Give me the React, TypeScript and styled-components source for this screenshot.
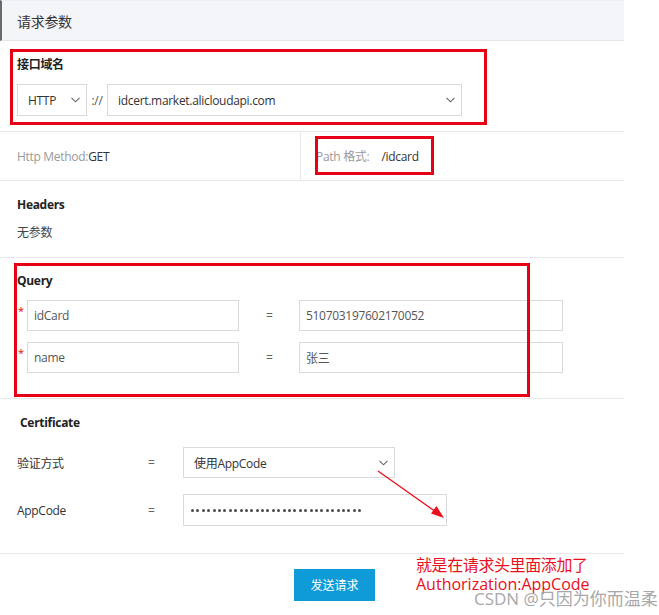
import React from 'react';
import styled, { createGlobalStyle } from 'styled-components';

const Global = createGlobalStyle`
  html, body { margin: 0; padding: 0; background: #fff; }
  body {
    font-family: "Open Sans", "Noto Sans CJK SC", sans-serif;
    font-size: 12px;
    letter-spacing: -0.3px;
    color: #333;
  }
  * { box-sizing: border-box; }
`;

const Page = styled.div`
  position: relative;
  width: 659px;
  height: 615px;
  overflow: hidden;
`;

const Panel = styled.div`
  width: 624px;
`;

const TitleBar = styled.div`
  height: 41px;
  background: #f4f5f9;
  border-left: 2px solid #6a6a6a;
  border-top: 1px solid #eceef3;
  border-bottom: 1px solid #e4e6eb;
  padding-left: 15px;
  display: flex;
  align-items: center;
  font-size: 14px;
  color: #333;
`;

const Section = styled.div<{ $pt: number; $pb: number; $pl?: number }>`
  position: relative;
  padding: ${p => p.$pt}px 0 ${p => p.$pb}px ${p => p.$pl ?? 17}px;
  border-bottom: 1px solid #e8e9ed;
`;

const Heading = styled.div<{ $mb: number; $indent?: number }>`
  font-weight: 700;
  line-height: 16px;
  color: #222;
  margin-bottom: ${p => p.$mb}px;
  padding-left: ${p => p.$indent ?? 0}px;
`;

const Note = styled.div`
  line-height: 16px;
  color: #444;
`;

const Frame = styled.div<{ $l: number; $t: number; $w: number; $h: number }>`
  position: absolute;
  left: ${p => p.$l}px;
  top: ${p => p.$t}px;
  width: ${p => p.$w}px;
  height: ${p => p.$h}px;
  border: 3px solid #e50015;
  pointer-events: none;
  z-index: 2;
`;

const DomainRow = styled.div`
  display: flex;
  align-items: center;
  gap: 4px;
`;

const Sep = styled.span`
  width: 12px;
  color: #555;
  text-align: center;
`;

const Select = styled.div<{ $w: number; $h?: number }>`
  width: ${p => p.$w}px;
  height: ${p => p.$h ?? 32}px;
  border: 1px solid #dadada;
  background: #fff;
  display: flex;
  align-items: center;
  justify-content: space-between;
  padding: 0 6px 0 10px;
  color: #333;
`;

const Input = styled.div<{ $w: number; $h?: number }>`
  width: ${p => p.$w}px;
  height: ${p => p.$h ?? 31}px;
  border: 1px solid #dadada;
  background: #fff;
  display: flex;
  align-items: center;
  padding-left: 6px;
  color: #555;
`;

const Mask = styled.div`
  display: flex;
  align-items: center;
  gap: 2.4px;
  padding-left: 1px;
`;

const MaskDot = styled.span`
  width: 3px;
  height: 3px;
  border-radius: 50%;
  background: #4a4a4a;
`;

const Chevron = () => (
  <svg width="9" height="6" viewBox="0 0 9 6">
    <polyline points="0.5,0.8 4.5,4.8 8.5,0.8" fill="none" stroke="#666" strokeWidth="1.1" />
  </svg>
);

const MethodRow = styled.div`
  display: grid;
  grid-template-columns: 301px 1fr;
  height: 49px;
  border-bottom: 1px solid #e8e9ed;
`;

const Cell = styled.div<{ $divider?: boolean; $pl: number }>`
  position: relative;
  display: flex;
  align-items: center;
  padding-left: ${p => p.$pl}px;
  border-right: ${p => (p.$divider ? '1px solid #e8e9ed' : 'none')};
`;

const Muted = styled.span`
  color: #9a9a9a;
`;

const Strong = styled.span<{ $ml?: number }>`
  color: #333;
  margin-left: ${p => p.$ml ?? 0}px;
`;

const QueryRows = styled.div`
  display: flex;
  flex-direction: column;
  gap: 11px;
`;

const QueryRow = styled.div`
  display: grid;
  grid-template-columns: 10px 212px 60px 264px;
  align-items: center;
`;

const Star = styled.span`
  align-self: start;
  margin-top: 7px;
  color: #e50015;
  font-size: 11px;
  line-height: 8px;
  padding-left: 1px;
`;

const Eq = styled.span<{ $pl: number }>`
  color: #666;
  padding-left: ${p => p.$pl}px;
`;

const CertRows = styled.div`
  display: flex;
  flex-direction: column;
  gap: 16px;
`;

const CertRow = styled.div`
  display: grid;
  grid-template-columns: 131px 35px auto;
  align-items: center;
`;

const Label = styled.span`
  color: #333;
`;

const Button = styled.button`
  width: 81px;
  height: 32px;
  border: none;
  background: #0f9bd7;
  color: #fff;
  font-family: "Open Sans", "Noto Sans CJK SC", sans-serif;
  font-size: 12px;
  padding: 0;
`;

const ButtonBar = styled.div`
  padding: 15px 0 0 294px;
`;

const Annotation = styled.div`
  position: absolute;
  left: 416px;
  top: 556px;
  color: #e8101c;
  font-size: 16px;
  line-height: 19px;
  z-index: 3;
`;

const AnnoLine = styled.div<{ $ls: number }>`
  letter-spacing: ${p => p.$ls}px;
  white-space: nowrap;
`;

const Watermark = styled.div`
  position: absolute;
  left: 474px;
  top: 588px;
  font-size: 17px;
  line-height: 22px;
  color: #a8a8a8;
  letter-spacing: 0;
  text-shadow: 0 0 1px #fff;
  white-space: nowrap;
  z-index: 4;
`;

const ArrowLayer = styled.svg`
  position: absolute;
  left: 0;
  top: 0;
  pointer-events: none;
  z-index: 3;
`;

export default function App() {
  return (
    <Page>
      <Global />
      <Panel>
        <TitleBar>请求参数</TitleBar>

        <Section $pt={16} $pb={15}>
          <Frame $l={10} $t={8} $w={477} $h={76} />
          <Heading $mb={11}>接口域名</Heading>
          <DomainRow>
            <Select $w={70}>
              <span>HTTP</span>
              <Chevron />
            </Select>
            <Sep>://</Sep>
            <Select $w={355}>
              <span>idcert.market.alicloudapi.com</span>
              <Chevron />
            </Select>
          </DomainRow>
        </Section>

        <MethodRow>
          <Cell $divider $pl={17}>
            <Muted>Http Method:</Muted>
            <Strong>GET</Strong>
          </Cell>
          <Cell $pl={15}>
            <Frame $l={14} $t={4} $w={119} $h={39} />
            <Muted>Path 格式:</Muted>
            <Strong $ml={12}>/idcard</Strong>
          </Cell>
        </MethodRow>

        <Section $pt={16} $pb={16}>
          <Heading $mb={12}>Headers</Heading>
          <Note>无参数</Note>
        </Section>

        <Section $pt={15} $pb={25}>
          <Frame $l={14} $t={5} $w={516} $h={134} />
          <Heading $mb={11}>Query</Heading>
          <QueryRows>
            <QueryRow>
              <Star>*</Star>
              <Input $w={212}>idCard</Input>
              <Eq $pl={27}>=</Eq>
              <Input $w={264}>510703197602170052</Input>
            </QueryRow>
            <QueryRow>
              <Star>*</Star>
              <Input $w={212}>name</Input>
              <Eq $pl={27}>=</Eq>
              <Input $w={264}>张三</Input>
            </QueryRow>
          </QueryRows>
        </Section>

        <Section $pt={16} $pb={27}>
          <Heading $mb={16} $indent={3}>Certificate</Heading>
          <CertRows>
            <CertRow>
              <Label>验证方式</Label>
              <Eq $pl={0}>=</Eq>
              <Select $w={212} $h={31}>
                <span>使用AppCode</span>
                <Chevron />
              </Select>
            </CertRow>
            <CertRow>
              <Label>AppCode</Label>
              <Eq $pl={0}>=</Eq>
              <Input $w={264} $h={32}>
                <Mask aria-label="password">
                  {Array.from({ length: 32 }, (_, i) => (
                    <MaskDot key={i} />
                  ))}
                </Mask>
              </Input>
            </CertRow>
          </CertRows>
        </Section>

        <ButtonBar>
          <Button>发送请求</Button>
        </ButtonBar>
      </Panel>

      <ArrowLayer width="659" height="615" viewBox="0 0 659 615">
        <line x1="378" y1="471" x2="436" y2="512" stroke="#e8101c" strokeWidth="1.3" />
        <polygon points="444,518 431,513.5 436.5,506" fill="#e8101c" />
      </ArrowLayer>

      <Annotation>
        <AnnoLine $ls={-0.4}>就是在请求头里面添加了</AnnoLine>
        <AnnoLine $ls={0}>Authorization:AppCode</AnnoLine>
      </Annotation>

      <Watermark>CSDN @只因为你而温柔</Watermark>
    </Page>
  );
}
